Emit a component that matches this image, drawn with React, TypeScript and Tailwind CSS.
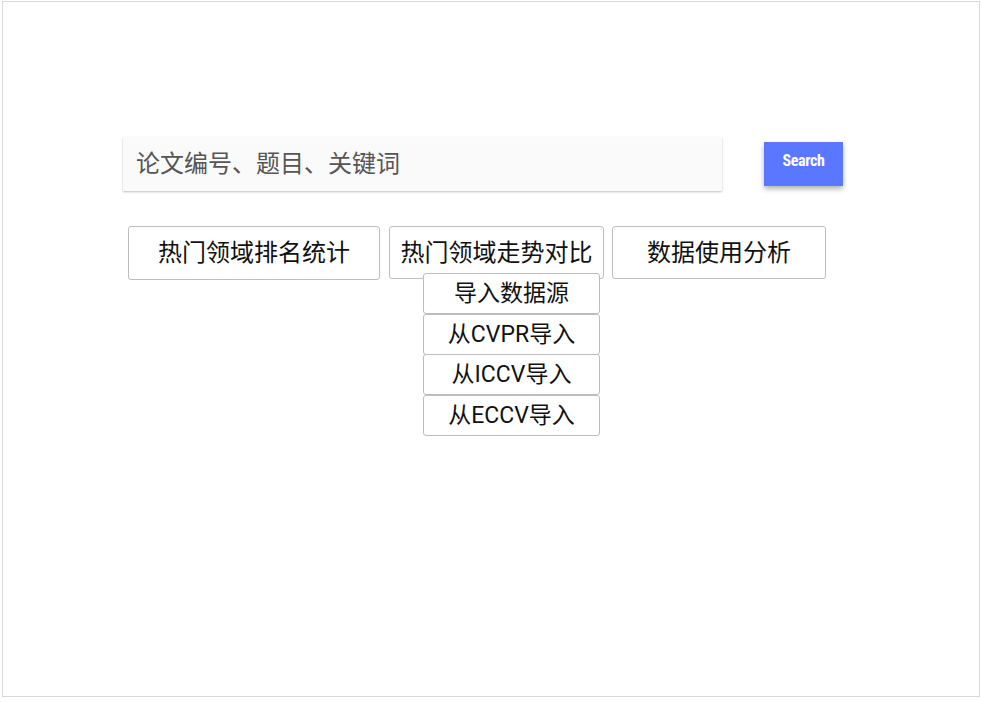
import React from "react";

const menuItems: string[] = ["导入数据源", "从CVPR导入", "从ICCV导入", "从ECCV导入"];

const App: React.FC = () => {
  return (
    <div className="w-[982px] h-[702px] bg-white pt-px pl-[2px] font-['Roboto','Noto_Sans_CJK_SC',sans-serif]">
      <div className="w-[978px] h-[696px] border border-[#d9d9d9] pt-[135px] pl-[120px]">
        {/* Search bar */}
        <div className="flex items-start">
          <div className="w-[599px] h-[54px] bg-[#fafafa] shadow-[0_1px_2px_rgba(0,0,0,0.25)] flex items-center pl-[13px] text-[24px] text-[#555]">
            论文编号、题目、关键词
          </div>
          <button className="ml-[42px] mt-[5px] w-[79px] h-[44px] pb-[6px] bg-[#5a78ff] text-white text-[16px] font-bold shadow-[0_3px_5px_rgba(0,0,0,0.3)] font-['Roboto_Condensed','Roboto',sans-serif] tracking-tight">
            Search
          </button>
        </div>

        {/* Action buttons */}
        <div className="flex mt-[35px] ml-[5px] text-[24px] text-[#111]">
          <button className="w-[252px] h-[54px] border border-[#bdbdbd] rounded-[3px] bg-white">
            热门领域排名统计
          </button>
          <div className="relative ml-[9px]">
            <button className="w-[215px] h-[53px] border border-[#bdbdbd] rounded-[3px] bg-white whitespace-nowrap">
              热门领域走势对比
            </button>
            <div className="absolute left-[34px] top-[47px] w-[177px] flex flex-col text-[23px]">
              {menuItems.map((item) => (
                <button
                  key={item}
                  className="h-[41px] -mb-[0.5px] border border-[#bdbdbd] rounded-[3px] bg-white leading-none"
                >
                  {item}
                </button>
              ))}
            </div>
          </div>
          <button className="ml-[8px] w-[214px] h-[53px] border border-[#bdbdbd] rounded-[3px] bg-white">
            数据使用分析
          </button>
        </div>
      </div>
    </div>
  );
};

export default App;
